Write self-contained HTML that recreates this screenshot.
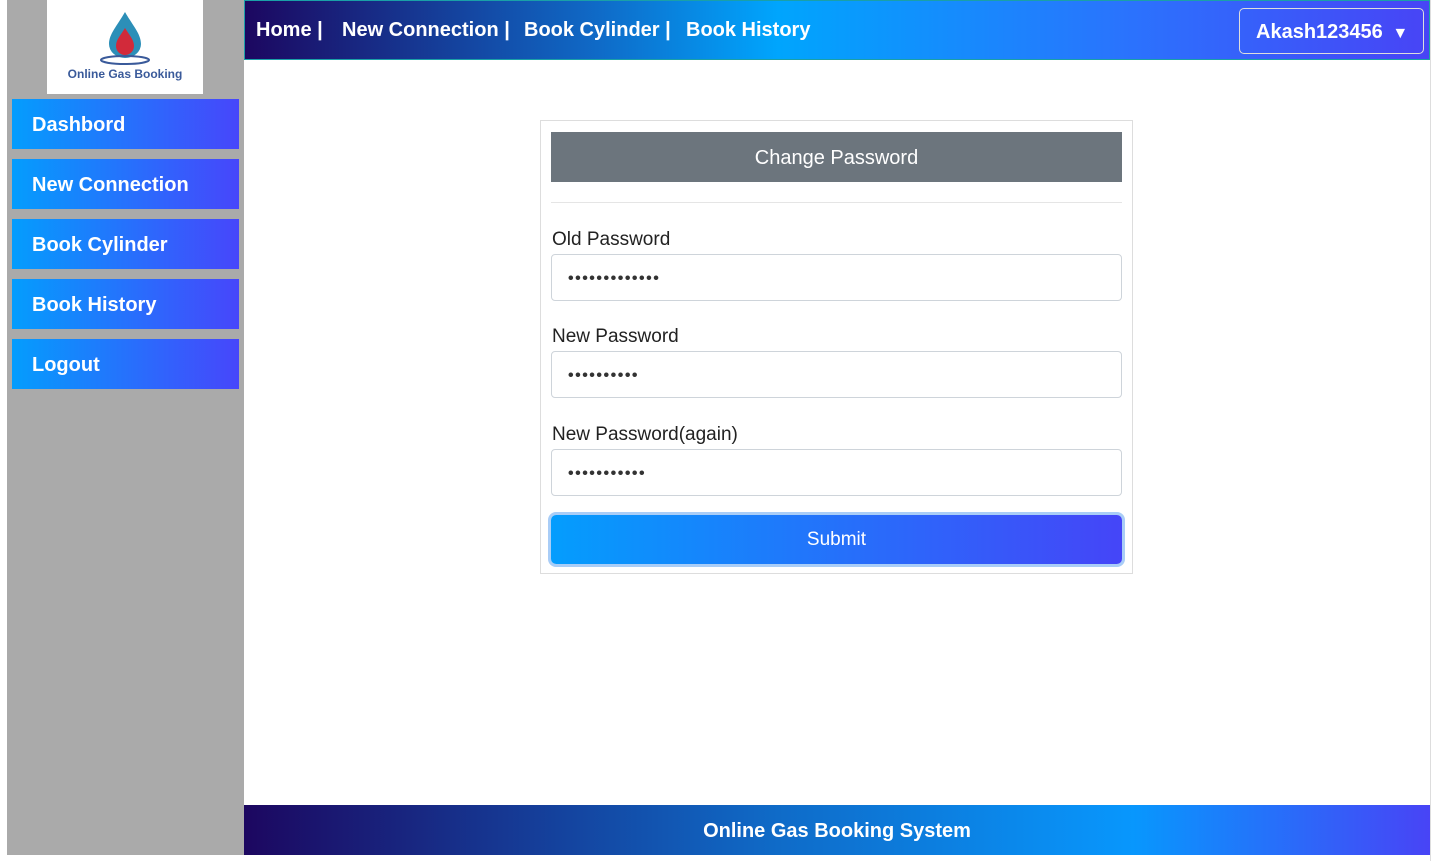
<!DOCTYPE html>
<html><head><style>
*{box-sizing:border-box;margin:0;padding:0}
body{width:1442px;height:861px;background:#fff;font-family:"Liberation Sans",sans-serif;position:relative;overflow:hidden}
.cs{font-family:"Comic Sans MS","Liberation Sans",sans-serif;font-weight:bold}
#side{position:absolute;left:7px;top:0;width:237px;height:855px;background:#aaa}
#logo{position:absolute;left:40px;top:0;width:156px;height:94px;background:#fff;text-align:center}
.mi{position:absolute;left:5px;width:227px;height:50px;background:linear-gradient(90deg,#049dfd,#4746fb);color:#fff;font-size:20px;line-height:52px;padding-left:20px}
#top{position:absolute;left:244px;top:0;width:1186px;height:60px;background:linear-gradient(90deg,#1c0760 0%,#0f6bc8 30%,#00a5fd 45%,#2b72fd 75%,#4844f6 100%);border:1px solid #1aa0a8;color:#fff;font-size:20px}
#top span{position:absolute;top:18px}
#user{position:absolute;left:994px;top:7px;width:185px;height:46px;border:1px solid #ddd;border-radius:5px;color:#fff;font-size:20px;line-height:46px;padding-left:16px}
#foot{position:absolute;left:244px;top:805px;width:1186px;height:50px;background:linear-gradient(90deg,#1c0760,#0f6bc8 45%,#0897fd 75%,#4844f6);color:#fff;font-size:20px;text-align:center;line-height:52px}
#rb{position:absolute;left:1430px;top:0;width:1px;height:861px;background:#ddd}
#card{position:absolute;left:540px;top:120px;width:593px;height:454px;border:1px solid #ddd}
#ch{position:absolute;left:10px;top:11px;width:571px;height:50px;background:#6c757d;color:#fff;font-size:20px;text-align:center;line-height:52px}
#hr{position:absolute;left:10px;top:81px;width:571px;height:1px;background:#e5e5e5}
.lb{position:absolute;left:11px;font-size:19px;color:#222}
.in{position:absolute;left:10px;width:571px;height:47px;border:1px solid #ced4da;border-radius:4px;font-size:16px;line-height:47px;padding-left:16px;letter-spacing:1.5px;color:#333;font-weight:bold}
#sub{position:absolute;left:10px;top:394px;width:571px;height:49px;border-radius:5px;background:linear-gradient(90deg,#049dfd,#4545f8);color:#fff;font-size:19px;text-align:center;line-height:49px;box-shadow:0 0 0 3px #a9cdf7}
</style></head><body>
<div id="side">
<div id="logo">
<svg width="60" height="56" viewBox="0 0 60 56" style="margin-top:10px"><path d="M30 2 C22 16 14 24 14 34 A16 14 0 0 0 46 34 C46 24 38 16 30 2Z" fill="#2c8fb8"/><path d="M30 18 C25 26 21 30 21 36 A9 9 0 0 0 39 36 C39 30 35 26 30 18Z" fill="#d22a3a"/><ellipse cx="30" cy="50" rx="24" ry="4" fill="none" stroke="#3a5a9a" stroke-width="2"/></svg>
<div style="font-size:12px;font-weight:bold;color:#3a5a9a;margin-top:-4px">Online Gas Booking</div>
</div>
<div class="mi cs" style="top:99px">Dashbord</div>
<div class="mi cs" style="top:159px">New Connection</div>
<div class="mi cs" style="top:219px">Book Cylinder</div>
<div class="mi cs" style="top:279px">Book History</div>
<div class="mi cs" style="top:339px">Logout</div>
</div>
<div id="top" class="cs">
<span style="left:11px">Home |</span>
<span style="left:97px">New Connection |</span>
<span style="left:279px">Book Cylinder |</span>
<span style="left:441px">Book History</span>
<div id="user">Akash123456 <span style="position:static;font-size:16px;margin-left:4px">▼</span></div>
</div>
<div id="rb"></div>
<div id="card">
<div id="ch">Change Password</div>
<div id="hr"></div>
<div class="lb" style="top:108px">Old Password</div>
<div class="in" style="top:133px">•••••••••••••</div>
<div class="lb" style="top:205px">New Password</div>
<div class="in" style="top:230px">••••••••••</div>
<div class="lb" style="top:303px">New Password(again)</div>
<div class="in" style="top:328px">•••••••••••</div>
<div id="sub">Submit</div>
</div>
<div id="foot" class="cs">Online Gas Booking System</div>
</body></html>
